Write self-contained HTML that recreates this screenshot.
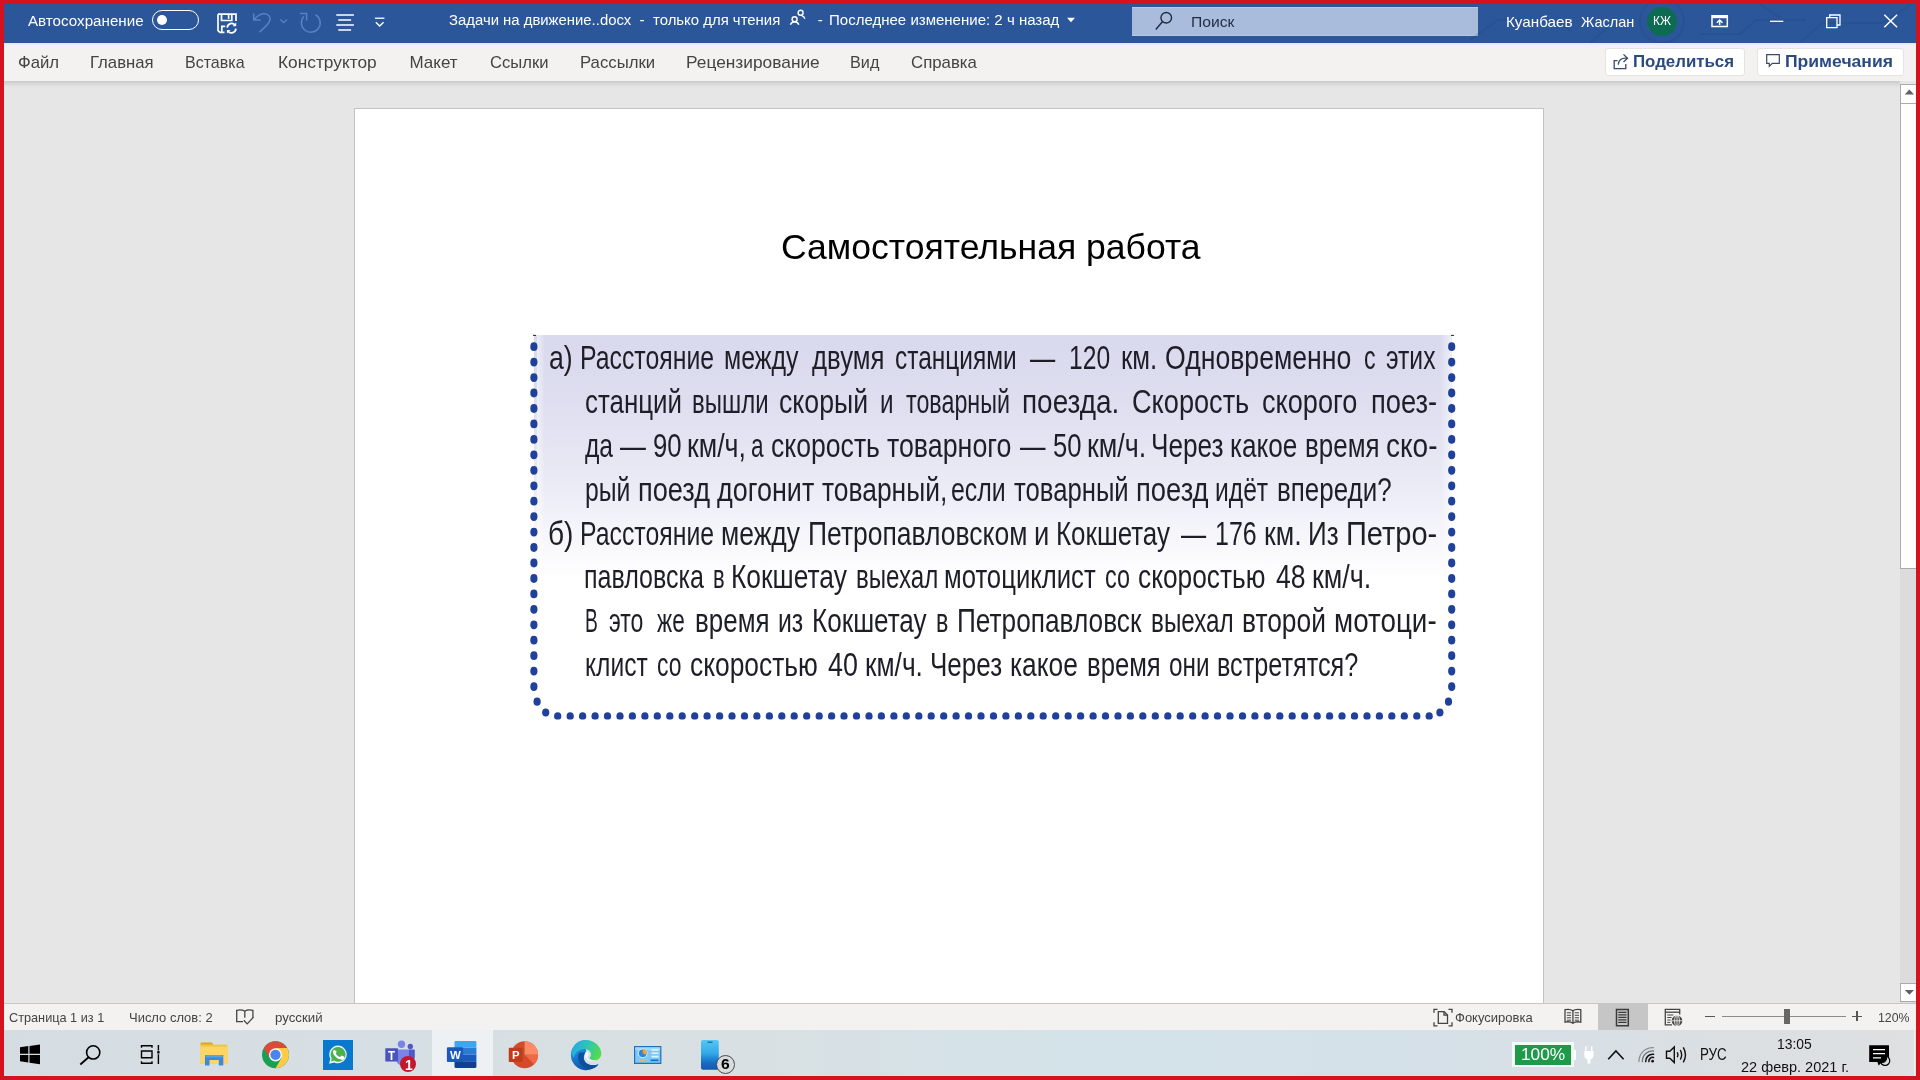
<!DOCTYPE html>
<html lang="ru"><head><meta charset="utf-8"><title>Задачи на движение..docx - Word</title>
<style>
html,body{margin:0;padding:0;background:#d4131f;}
body{width:1920px;height:1080px;overflow:hidden;position:relative;font-family:'Liberation Sans',sans-serif;}
#screen{position:absolute;left:0;top:0;width:1920px;height:1080px;overflow:hidden;background:#d4131f;will-change:transform;}
#screen div,#screen svg,#screen span.t,#screen .layer{position:absolute;}
.layer{left:0;top:0;width:1920px;height:1080px;display:block;}
span.t{white-space:pre;transform-origin:0 0;display:block;}
</style></head><body><div id="screen">
<header id="word-chrome" class="layer">
<!-- ===== title bar ===== -->
<div style="left:4px;top:4px;width:1912px;height:38.7px;background:#2b579a;"></div>
<span class="t" style="left:28.30px;top:12.85px;font-size:15.3px;line-height:15.3px;color:#fff;transform:scaleX(0.9914);">Автосохранение</span>
<div style="left:152.2px;top:10.2px;width:47px;height:19.4px;background:transparent;border:1.4px solid #fff;border-radius:11px;box-sizing:border-box;"></div>
<div style="left:157.1px;top:15.25px;width:10px;height:10px;background:#fff;border-radius:50%;"></div>
<svg style="left:216px;top:12px;" width="22" height="22" viewBox="0 0 22 22"><g fill="none" stroke="#fff" stroke-width="1.700">
<path d="M2 2.200h18v6.800M2 2.200v16.400l2 1.800h4.500"/><path d="M5.5 2.2v6.3h10.3V2.2"/><path d="M12.6 2.8v4"/><path d="M5.8 20v-5.6h3.4"/>
<path d="M11.2 15.6a4.4 4.4 0 0 1 8-2.2M19.9 16.6a4.4 4.4 0 0 1-8 2.3"/></g>
<path d="M20.2 10.6v3.6h-3.6zM10.9 21.6V18h3.6z" fill="#fff"/></svg>
<svg style="left:250px;top:11px;" width="24" height="24" viewBox="0 0 24 24"><g fill="none" stroke="#5782c6" stroke-width="1.5">
<path d="M3.75 2.5v6.600h6.850"/><path d="M3.9 9C7 5 10.500 2.800 14.400 2.800c3.600 0 5.900 2.500 5.600 5.800-.300 3.900-6 8.400-10.600 12.650"/></g></svg>
<svg style="left:279px;top:17px;" width="10" height="8" viewBox="0 0 10 8"><path d="M1.300 2.400l3.450 3.200L8 2.400" fill="none" stroke="#5782c6" stroke-width="1.300"/></svg>
<svg style="left:297px;top:10px;" width="26" height="26" viewBox="0 0 26 26"><g fill="none" stroke="#5782c6" stroke-width="1.5">
<path d="M3 3.500h6.600v6.900"/><path d="M18.600 4.750A9.400 9.400 0 1 1 6.750 6.600"/></g></svg>
<svg style="left:335px;top:13px;" width="20" height="20" viewBox="0 0 20 20"><g stroke="#fff" stroke-width="1.5"><path d="M1.300 1.900h17.600M3.300 7h12.800M1.300 12h17.600M3.300 17h12.800"/></g></svg>
<svg style="left:374px;top:15px;" width="12" height="14" viewBox="0 0 12 14"><path d="M1 3.200h9.400" stroke="#fff" stroke-width="1.300"/><path d="M1.800 7.200l3.900 3.900 3.900-3.900" fill="none" stroke="#fff" stroke-width="1.400"/></svg>
<span class="t" style="left:448.81px;top:11.85px;font-size:15.3px;line-height:15.3px;color:#fff;transform:scaleX(0.9725);">Задачи на движение..docx</span>
<span class="t" style="left:639.38px;top:11.85px;font-size:15.3px;line-height:15.3px;color:#fff;">-</span>
<span class="t" style="left:653.06px;top:11.85px;font-size:15.3px;line-height:15.3px;color:#fff;transform:scaleX(0.9750);">только для чтения</span>
<svg style="left:788px;top:8px;" width="20" height="20" viewBox="0 0 20 20"><g fill="none" stroke="#fff" stroke-width="1.400"><circle cx="12.600" cy="4.750" r="2.500"/><circle cx="6.600" cy="11.200" r="2.500"/>
<path d="M13.800 7.700c1.500.500 2.600 1.600 3.100 3.100M2.400 16.800a4.400 4.400 0 0 1 8.400 0"/></g></svg>
<span class="t" style="left:817.67px;top:11.85px;font-size:15.3px;line-height:15.3px;color:#fff;">-</span>
<span class="t" style="left:829.13px;top:11.85px;font-size:15.3px;line-height:15.3px;color:#fff;transform:scaleX(0.9818);">Последнее изменение: 2 ч назад</span>
<svg style="left:1066px;top:17px;" width="10" height="6" viewBox="0 0 10 6"><path d="M1 .800h8L5 5.300z" fill="#fff"/></svg>
<div style="left:1132px;top:7px;width:346px;height:29.2px;background:#a9bcdb;border-top:1px solid #b4c8ea;border-bottom:1px solid #b4c8ea;box-sizing:border-box;"></div>
<svg style="left:1154px;top:11px;" width="22" height="20" viewBox="0 0 22 20"><circle cx="12.250" cy="6.750" r="5.300" fill="none" stroke="#1f2d44" stroke-width="1.400"/><path d="M8.600 10.600L1.800 18.400" stroke="#1f2d44" stroke-width="1.500"/></svg>
<span class="t" style="left:1191.46px;top:13.80px;font-size:15px;line-height:15px;color:#1f2d44;transform:scaleX(1.0444);">Поиск</span>
<svg style="left:1470px;top:4px;" width="446" height="39" viewBox="0 0 446 39"><g fill="none" stroke="#1d3f7a" stroke-opacity=".22" stroke-width="2"><circle cx="192" cy="17" r="22"/><path d="M0 36l28-20h60l14 12"/><path d="M120 39l18-16"/><path d="M230 30h40l16-14h50"/><path d="M330 39l22-20h60l30-19"/><path d="M290 0l20 14"/></g></svg>
<span class="t" style="left:1506.29px;top:14.10px;font-size:15px;line-height:15px;color:#fff;transform:scaleX(1.0154);">Куанбаев</span>
<span class="t" style="left:1580.82px;top:14.10px;font-size:15px;line-height:15px;color:#fff;transform:scaleX(0.9645);">Жаслан</span>
<div style="left:1647.3px;top:6.8px;width:29.4px;height:29.4px;background:#0c6b50;border-radius:50%;"></div>
<span class="t" style="left:1652.85px;top:15.32px;font-size:12.5px;line-height:12.5px;color:#fff;transform:scaleX(0.9515);">КЖ</span>
<svg style="left:1709px;top:13px;" width="22" height="16" viewBox="0 0 22 16"><g fill="none" stroke="#fff" stroke-width="1.500"><path d="M3 2.700h15.300v10.800H3z"/><path d="M3 4h15.300" stroke-width="2.400"/><path d="M10.650 12V7.200M7.800 9.800l2.850-2.800 2.850 2.800"/></g></svg>
<svg style="left:1769px;top:20px;" width="16" height="3" viewBox="0 0 16 3"><path d="M1 1.300h13.300" stroke="#fff" stroke-width="1.300"/></svg>
<svg style="left:1825px;top:13px;" width="18" height="16" viewBox="0 0 18 16"><g fill="none" stroke="#fff" stroke-width="1.300"><path d="M1.700 4.700h10.300v10h-10.300z"/><path d="M4.700 4.700V2h10.300v10h-3"/></g></svg>
<svg style="left:1883px;top:13px;" width="16" height="16" viewBox="0 0 16 16"><path d="M1.300 1.700l12.800 12.600M14.100 1.700L1.300 14.300" stroke="#fff" stroke-width="1.500"/></svg>
<!-- ===== ribbon tabs ===== -->
<div style="left:4px;top:42.7px;width:1912px;height:38.2px;background:#f3f2f1;"></div>
<div style="left:4px;top:42.7px;width:1912px;height:3.3px;background:linear-gradient(#dde9fa,#e9eef6 60%,#f3f2f1);"></div>
<span class="t" style="left:17.52px;top:53.71px;font-size:17px;line-height:17px;color:#444;transform:scaleX(0.9838);">Файл</span>
<span class="t" style="left:90.40px;top:53.71px;font-size:17px;line-height:17px;color:#444;transform:scaleX(0.9823);">Главная</span>
<span class="t" style="left:184.55px;top:53.71px;font-size:17px;line-height:17px;color:#444;transform:scaleX(0.9425);">Вставка</span>
<span class="t" style="left:278.35px;top:53.71px;font-size:17px;line-height:17px;color:#444;transform:scaleX(1.0178);">Конструктор</span>
<span class="t" style="left:409.47px;top:53.71px;font-size:17px;line-height:17px;color:#444;">Макет</span>
<span class="t" style="left:489.52px;top:53.71px;font-size:17px;line-height:17px;color:#444;transform:scaleX(0.9766);">Ссылки</span>
<span class="t" style="left:580.09px;top:53.71px;font-size:17px;line-height:17px;color:#444;transform:scaleX(0.9841);">Рассылки</span>
<span class="t" style="left:686.35px;top:53.71px;font-size:17px;line-height:17px;color:#444;transform:scaleX(1.0189);">Рецензирование</span>
<span class="t" style="left:850.33px;top:53.71px;font-size:17px;line-height:17px;color:#444;transform:scaleX(0.9545);">Вид</span>
<span class="t" style="left:910.51px;top:53.71px;font-size:17px;line-height:17px;color:#444;transform:scaleX(0.9879);">Справка</span>
<div style="left:1605px;top:47.5px;width:140px;height:28.5px;background:#fff;border:1px solid #e6e4e2;border-radius:3px;box-sizing:border-box;"></div>
<svg style="left:1612px;top:52px;" width="18" height="19" viewBox="0 0 18 19"><g fill="none" stroke="#3b4a66" stroke-width="1.300"><path d="M5.500 8.700H2.200v8h11.600V12"/><path d="M6.300 12.800c.300-4.300 3.200-6.600 7.200-6.600h2"/><path d="M11.500 2.400l4 3.800-4 3.800"/></g></svg>
<span class="t" style="left:1633.38px;top:54.06px;font-size:16px;line-height:16px;color:#2a4a80;font-weight:bold;transform:scaleX(1.0525);">Поделиться</span>
<div style="left:1757px;top:47.5px;width:147px;height:28.5px;background:#fff;border:1px solid #e6e4e2;border-radius:3px;box-sizing:border-box;"></div>
<svg style="left:1765px;top:53px;" width="16" height="16" viewBox="0 0 16 16"><path d="M1.700 1.700h12.600v8.600H7.300l-3 3v-3H1.700z" fill="none" stroke="#3b4a66" stroke-width="1.200"/></svg>
<span class="t" style="left:1785.34px;top:54.06px;font-size:16px;line-height:16px;color:#2a4a80;font-weight:bold;transform:scaleX(1.0963);">Примечания</span>
</header>
<main id="document-area" class="layer">
<!-- ===== document area ===== -->
<div style="left:4px;top:80.9px;width:1912px;height:922.1px;background:#e6e6e6;"></div>
<div style="left:4px;top:80.9px;width:1896px;height:6px;background:linear-gradient(#cbcbcb,#e6e6e6);"></div>
<div style="left:354px;top:108px;width:1190px;height:896px;background:#fff;border:1px solid #c3c3c3;border-bottom:none;box-sizing:border-box;"></div>
<span class="t" style="left:780.73px;top:229.63px;font-size:35.4px;line-height:35.4px;color:#000;transform:scaleX(1.0047);">Самостоятельная работа</span>
<div style="left:533.5px;top:335px;width:918.5px;height:385px;background:linear-gradient(#d9d9ee 0%,#dedef0 17%,#e5e5f3 30%,#eeeef8 43%,#f7f7fb 53%,#fefeff 62%,#fff 66%);"></div>
<div style="left:537px;top:335px;width:8px;height:385px;background:linear-gradient(90deg,rgba(255,255,255,.55),rgba(255,255,255,0));"></div>
<div style="left:1440px;top:335px;width:12px;height:385px;background:linear-gradient(90deg,rgba(255,255,255,0),rgba(255,255,255,.6));"></div>
<svg style="left:525px;top:330px;clip-path:inset(0 0 0.5px 0);" width="940" height="390" viewBox="0 0 940 390"><g fill="#20419a"><ellipse cx="8.9" cy="16.7" rx="3.6" ry="4.4"/><ellipse cx="926.7" cy="16.7" rx="3.6" ry="4.4"/><ellipse cx="8.9" cy="32.1" rx="3.6" ry="4.4"/><ellipse cx="926.7" cy="32.1" rx="3.6" ry="4.4"/><ellipse cx="8.9" cy="47.6" rx="3.6" ry="4.4"/><ellipse cx="926.7" cy="47.6" rx="3.6" ry="4.4"/><ellipse cx="8.9" cy="63.0" rx="3.6" ry="4.4"/><ellipse cx="926.7" cy="63.0" rx="3.6" ry="4.4"/><ellipse cx="8.9" cy="78.5" rx="3.6" ry="4.4"/><ellipse cx="926.7" cy="78.5" rx="3.6" ry="4.4"/><ellipse cx="8.9" cy="93.9" rx="3.6" ry="4.4"/><ellipse cx="926.7" cy="93.9" rx="3.6" ry="4.4"/><ellipse cx="8.9" cy="109.4" rx="3.6" ry="4.4"/><ellipse cx="926.7" cy="109.4" rx="3.6" ry="4.4"/><ellipse cx="8.9" cy="124.8" rx="3.6" ry="4.4"/><ellipse cx="926.7" cy="124.8" rx="3.6" ry="4.4"/><ellipse cx="8.9" cy="140.3" rx="3.6" ry="4.4"/><ellipse cx="926.7" cy="140.3" rx="3.6" ry="4.4"/><ellipse cx="8.9" cy="155.8" rx="3.6" ry="4.4"/><ellipse cx="926.7" cy="155.8" rx="3.6" ry="4.4"/><ellipse cx="8.9" cy="171.2" rx="3.6" ry="4.4"/><ellipse cx="926.7" cy="171.2" rx="3.6" ry="4.4"/><ellipse cx="8.9" cy="186.6" rx="3.6" ry="4.4"/><ellipse cx="926.7" cy="186.6" rx="3.6" ry="4.4"/><ellipse cx="8.9" cy="202.1" rx="3.6" ry="4.4"/><ellipse cx="926.7" cy="202.1" rx="3.6" ry="4.4"/><ellipse cx="8.9" cy="217.5" rx="3.6" ry="4.4"/><ellipse cx="926.7" cy="217.5" rx="3.6" ry="4.4"/><ellipse cx="8.9" cy="233.0" rx="3.6" ry="4.4"/><ellipse cx="926.7" cy="233.0" rx="3.6" ry="4.4"/><ellipse cx="8.9" cy="248.5" rx="3.6" ry="4.4"/><ellipse cx="926.7" cy="248.5" rx="3.6" ry="4.4"/><ellipse cx="8.9" cy="263.9" rx="3.6" ry="4.4"/><ellipse cx="926.7" cy="263.9" rx="3.6" ry="4.4"/><ellipse cx="8.9" cy="279.3" rx="3.6" ry="4.4"/><ellipse cx="926.7" cy="279.3" rx="3.6" ry="4.4"/><ellipse cx="8.9" cy="294.8" rx="3.6" ry="4.4"/><ellipse cx="926.7" cy="294.8" rx="3.6" ry="4.4"/><ellipse cx="8.9" cy="310.2" rx="3.6" ry="4.4"/><ellipse cx="926.7" cy="310.2" rx="3.6" ry="4.4"/><ellipse cx="8.9" cy="325.7" rx="3.6" ry="4.4"/><ellipse cx="926.7" cy="325.7" rx="3.6" ry="4.4"/><ellipse cx="8.9" cy="341.1" rx="3.6" ry="4.4"/><ellipse cx="926.7" cy="341.1" rx="3.6" ry="4.4"/><ellipse cx="8.9" cy="356.6" rx="3.6" ry="4.4"/><ellipse cx="926.7" cy="356.6" rx="3.6" ry="4.4"/><ellipse cx="12.1" cy="371.7" rx="3.6" ry="4.1"/><ellipse cx="20.7" cy="382.5" rx="3.6" ry="3.9"/><ellipse cx="923.5" cy="371.7" rx="3.6" ry="4.1"/><ellipse cx="914.9" cy="382.5" rx="3.6" ry="3.9"/><ellipse cx="32.7" cy="386.2" rx="3.6" ry="3.9"/><ellipse cx="45.2" cy="386.2" rx="3.6" ry="3.9"/><ellipse cx="57.6" cy="386.2" rx="3.6" ry="3.9"/><ellipse cx="70.1" cy="386.2" rx="3.6" ry="3.9"/><ellipse cx="82.5" cy="386.2" rx="3.6" ry="3.9"/><ellipse cx="95.0" cy="386.2" rx="3.6" ry="3.9"/><ellipse cx="107.4" cy="386.2" rx="3.6" ry="3.9"/><ellipse cx="119.9" cy="386.2" rx="3.6" ry="3.9"/><ellipse cx="132.3" cy="386.2" rx="3.6" ry="3.9"/><ellipse cx="144.8" cy="386.2" rx="3.6" ry="3.9"/><ellipse cx="157.2" cy="386.2" rx="3.6" ry="3.9"/><ellipse cx="169.7" cy="386.2" rx="3.6" ry="3.9"/><ellipse cx="182.1" cy="386.2" rx="3.6" ry="3.9"/><ellipse cx="194.6" cy="386.2" rx="3.6" ry="3.9"/><ellipse cx="207.0" cy="386.2" rx="3.6" ry="3.9"/><ellipse cx="219.5" cy="386.2" rx="3.6" ry="3.9"/><ellipse cx="231.9" cy="386.2" rx="3.6" ry="3.9"/><ellipse cx="244.4" cy="386.2" rx="3.6" ry="3.9"/><ellipse cx="256.8" cy="386.2" rx="3.6" ry="3.9"/><ellipse cx="269.2" cy="386.2" rx="3.6" ry="3.9"/><ellipse cx="281.7" cy="386.2" rx="3.6" ry="3.9"/><ellipse cx="294.2" cy="386.2" rx="3.6" ry="3.9"/><ellipse cx="306.6" cy="386.2" rx="3.6" ry="3.9"/><ellipse cx="319.0" cy="386.2" rx="3.6" ry="3.9"/><ellipse cx="331.5" cy="386.2" rx="3.6" ry="3.9"/><ellipse cx="344.0" cy="386.2" rx="3.6" ry="3.9"/><ellipse cx="356.4" cy="386.2" rx="3.6" ry="3.9"/><ellipse cx="368.9" cy="386.2" rx="3.6" ry="3.9"/><ellipse cx="381.3" cy="386.2" rx="3.6" ry="3.9"/><ellipse cx="393.8" cy="386.2" rx="3.6" ry="3.9"/><ellipse cx="406.2" cy="386.2" rx="3.6" ry="3.9"/><ellipse cx="418.7" cy="386.2" rx="3.6" ry="3.9"/><ellipse cx="431.1" cy="386.2" rx="3.6" ry="3.9"/><ellipse cx="443.5" cy="386.2" rx="3.6" ry="3.9"/><ellipse cx="456.0" cy="386.2" rx="3.6" ry="3.9"/><ellipse cx="468.5" cy="386.2" rx="3.6" ry="3.9"/><ellipse cx="480.9" cy="386.2" rx="3.6" ry="3.9"/><ellipse cx="493.4" cy="386.2" rx="3.6" ry="3.9"/><ellipse cx="505.8" cy="386.2" rx="3.6" ry="3.9"/><ellipse cx="518.2" cy="386.2" rx="3.6" ry="3.9"/><ellipse cx="530.7" cy="386.2" rx="3.6" ry="3.9"/><ellipse cx="543.2" cy="386.2" rx="3.6" ry="3.9"/><ellipse cx="555.6" cy="386.2" rx="3.6" ry="3.9"/><ellipse cx="568.1" cy="386.2" rx="3.6" ry="3.9"/><ellipse cx="580.5" cy="386.2" rx="3.6" ry="3.9"/><ellipse cx="593.0" cy="386.2" rx="3.6" ry="3.9"/><ellipse cx="605.4" cy="386.2" rx="3.6" ry="3.9"/><ellipse cx="617.8" cy="386.2" rx="3.6" ry="3.9"/><ellipse cx="630.3" cy="386.2" rx="3.6" ry="3.9"/><ellipse cx="642.8" cy="386.2" rx="3.6" ry="3.9"/><ellipse cx="655.2" cy="386.2" rx="3.6" ry="3.9"/><ellipse cx="667.7" cy="386.2" rx="3.6" ry="3.9"/><ellipse cx="680.1" cy="386.2" rx="3.6" ry="3.9"/><ellipse cx="692.5" cy="386.2" rx="3.6" ry="3.9"/><ellipse cx="705.0" cy="386.2" rx="3.6" ry="3.9"/><ellipse cx="717.5" cy="386.2" rx="3.6" ry="3.9"/><ellipse cx="729.9" cy="386.2" rx="3.6" ry="3.9"/><ellipse cx="742.3" cy="386.2" rx="3.6" ry="3.9"/><ellipse cx="754.8" cy="386.2" rx="3.6" ry="3.9"/><ellipse cx="767.2" cy="386.2" rx="3.6" ry="3.9"/><ellipse cx="779.7" cy="386.2" rx="3.6" ry="3.9"/><ellipse cx="792.2" cy="386.2" rx="3.6" ry="3.9"/><ellipse cx="804.6" cy="386.2" rx="3.6" ry="3.9"/><ellipse cx="817.0" cy="386.2" rx="3.6" ry="3.9"/><ellipse cx="829.5" cy="386.2" rx="3.6" ry="3.9"/><ellipse cx="842.0" cy="386.2" rx="3.6" ry="3.9"/><ellipse cx="854.4" cy="386.2" rx="3.6" ry="3.9"/><ellipse cx="866.8" cy="386.2" rx="3.6" ry="3.9"/><ellipse cx="879.3" cy="386.2" rx="3.6" ry="3.9"/><ellipse cx="891.8" cy="386.2" rx="3.6" ry="3.9"/><ellipse cx="904.2" cy="386.2" rx="3.6" ry="3.9"/></g><path d="M8 5.4h3M926 5.4h3" stroke="#222" stroke-width="1"/></svg>
<div id="task-text" style="left:0;top:0;width:0;height:0;" lang="ru">
<div class="ln" style="left:0;top:0;width:0;height:0;">
<span class="t" style="left:548.77px;top:341.17px;font-size:33px;line-height:33px;color:#1e1e28;transform:scaleX(0.8082);">а)</span>
<span class="t" style="left:579.96px;top:341.17px;font-size:33px;line-height:33px;color:#1e1e28;transform:scaleX(0.7520);">Расстояние</span>
<span class="t" style="left:724.14px;top:341.17px;font-size:33px;line-height:33px;color:#1e1e28;transform:scaleX(0.7570);">между</span>
<span class="t" style="left:812.00px;top:341.17px;font-size:33px;line-height:33px;color:#1e1e28;transform:scaleX(0.7814);">двумя</span>
<span class="t" style="left:895.04px;top:341.17px;font-size:33px;line-height:33px;color:#1e1e28;transform:scaleX(0.7408);">станциями</span>
<span class="t" style="left:1029.50px;top:341.17px;font-size:33px;line-height:33px;color:#1e1e28;transform:scaleX(0.7636);">—</span>
<span class="t" style="left:1068.76px;top:341.17px;font-size:33px;line-height:33px;color:#1e1e28;transform:scaleX(0.7475);">120</span>
<span class="t" style="left:1120.88px;top:341.17px;font-size:33px;line-height:33px;color:#1e1e28;transform:scaleX(0.7830);">км.</span>
<span class="t" style="left:1165.35px;top:341.17px;font-size:33px;line-height:33px;color:#1e1e28;transform:scaleX(0.8071);">Одновременно</span>
<span class="t" style="left:1363.68px;top:341.17px;font-size:33px;line-height:33px;color:#1e1e28;transform:scaleX(0.7022);">с</span>
<span class="t" style="left:1386.11px;top:341.17px;font-size:33px;line-height:33px;color:#1e1e28;transform:scaleX(0.7480);">этих</span>
</div>
<div class="ln" style="left:0;top:0;width:0;height:0;">
<span class="t" style="left:584.69px;top:384.67px;font-size:33px;line-height:33px;color:#1e1e28;transform:scaleX(0.7851);">станций</span>
<span class="t" style="left:691.80px;top:384.67px;font-size:33px;line-height:33px;color:#1e1e28;transform:scaleX(0.7267);">вышли</span>
<span class="t" style="left:779.47px;top:384.67px;font-size:33px;line-height:33px;color:#1e1e28;transform:scaleX(0.8088);">скорый</span>
<span class="t" style="left:879.89px;top:384.67px;font-size:33px;line-height:33px;color:#1e1e28;transform:scaleX(0.7342);">и</span>
<span class="t" style="left:906.14px;top:384.67px;font-size:33px;line-height:33px;color:#1e1e28;transform:scaleX(0.7054);">товарный</span>
<span class="t" style="left:1021.76px;top:384.67px;font-size:33px;line-height:33px;color:#1e1e28;transform:scaleX(0.8455);">поезда.</span>
<span class="t" style="left:1132.43px;top:384.67px;font-size:33px;line-height:33px;color:#1e1e28;transform:scaleX(0.8229);">Скорость</span>
<span class="t" style="left:1262.25px;top:384.67px;font-size:33px;line-height:33px;color:#1e1e28;transform:scaleX(0.8226);">скорого</span>
<span class="t" style="left:1370.89px;top:384.67px;font-size:33px;line-height:33px;color:#1e1e28;transform:scaleX(0.8277);">поез-</span>
</div>
<div class="ln" style="left:0;top:0;width:0;height:0;">
<span class="t" style="left:584.90px;top:428.77px;font-size:33px;line-height:33px;color:#1e1e28;transform:scaleX(0.7457);">да</span>
<span class="t" style="left:620.30px;top:428.77px;font-size:33px;line-height:33px;color:#1e1e28;transform:scaleX(0.7848);">—</span>
<span class="t" style="left:652.69px;top:428.77px;font-size:33px;line-height:33px;color:#1e1e28;transform:scaleX(0.7805);">90</span>
<span class="t" style="left:687.43px;top:428.77px;font-size:33px;line-height:33px;color:#1e1e28;transform:scaleX(0.8117);">км/ч,</span>
<span class="t" style="left:751.39px;top:428.77px;font-size:33px;line-height:33px;color:#1e1e28;transform:scaleX(0.6845);">а</span>
<span class="t" style="left:771.17px;top:428.77px;font-size:33px;line-height:33px;color:#1e1e28;transform:scaleX(0.8057);">скорость</span>
<span class="t" style="left:886.98px;top:428.77px;font-size:33px;line-height:33px;color:#1e1e28;transform:scaleX(0.8120);">товарного</span>
<span class="t" style="left:1020.10px;top:428.77px;font-size:33px;line-height:33px;color:#1e1e28;transform:scaleX(0.7727);">—</span>
<span class="t" style="left:1052.70px;top:428.77px;font-size:33px;line-height:33px;color:#1e1e28;transform:scaleX(0.7776);">50</span>
<span class="t" style="left:1086.52px;top:428.77px;font-size:33px;line-height:33px;color:#1e1e28;transform:scaleX(0.8150);">км/ч.</span>
<span class="t" style="left:1150.86px;top:428.77px;font-size:33px;line-height:33px;color:#1e1e28;transform:scaleX(0.7927);">Через</span>
<span class="t" style="left:1230.37px;top:428.77px;font-size:33px;line-height:33px;color:#1e1e28;transform:scaleX(0.7926);">какое</span>
<span class="t" style="left:1304.58px;top:428.77px;font-size:33px;line-height:33px;color:#1e1e28;transform:scaleX(0.7859);">время</span>
<span class="t" style="left:1385.62px;top:428.77px;font-size:33px;line-height:33px;color:#1e1e28;transform:scaleX(0.8489);">ско-</span>
</div>
<div class="ln" style="left:0;top:0;width:0;height:0;">
<span class="t" style="left:584.75px;top:472.57px;font-size:33px;line-height:33px;color:#1e1e28;transform:scaleX(0.7503);">рый</span>
<span class="t" style="left:637.80px;top:472.57px;font-size:33px;line-height:33px;color:#1e1e28;transform:scaleX(0.8233);">поезд</span>
<span class="t" style="left:717.30px;top:472.57px;font-size:33px;line-height:33px;color:#1e1e28;transform:scaleX(0.8168);">догонит</span>
<span class="t" style="left:822.39px;top:472.57px;font-size:33px;line-height:33px;color:#1e1e28;transform:scaleX(0.8005);">товарный,</span>
<span class="t" style="left:951.32px;top:472.57px;font-size:33px;line-height:33px;color:#1e1e28;transform:scaleX(0.7546);">если</span>
<span class="t" style="left:1013.80px;top:472.57px;font-size:33px;line-height:33px;color:#1e1e28;transform:scaleX(0.7785);">товарный</span>
<span class="t" style="left:1135.59px;top:472.57px;font-size:33px;line-height:33px;color:#1e1e28;transform:scaleX(0.8291);">поезд</span>
<span class="t" style="left:1214.86px;top:472.57px;font-size:33px;line-height:33px;color:#1e1e28;transform:scaleX(0.7471);">идёт</span>
<span class="t" style="left:1276.58px;top:472.57px;font-size:33px;line-height:33px;color:#1e1e28;transform:scaleX(0.7866);">впереди?</span>
</div>
<div class="ln" style="left:0;top:0;width:0;height:0;">
<span class="t" style="left:548.28px;top:516.57px;font-size:33px;line-height:33px;color:#1e1e28;transform:scaleX(0.8523);">б)</span>
<span class="t" style="left:579.96px;top:516.57px;font-size:33px;line-height:33px;color:#1e1e28;transform:scaleX(0.7520);">Расстояние</span>
<span class="t" style="left:720.94px;top:516.57px;font-size:33px;line-height:33px;color:#1e1e28;transform:scaleX(0.8026);">между</span>
<span class="t" style="left:808.13px;top:516.57px;font-size:33px;line-height:33px;color:#1e1e28;transform:scaleX(0.8029);">Петропавловском</span>
<span class="t" style="left:1033.79px;top:516.57px;font-size:33px;line-height:33px;color:#1e1e28;transform:scaleX(0.8312);">и</span>
<span class="t" style="left:1056.27px;top:516.57px;font-size:33px;line-height:33px;color:#1e1e28;transform:scaleX(0.7859);">Кокшетау</span>
<span class="t" style="left:1180.50px;top:516.57px;font-size:33px;line-height:33px;color:#1e1e28;transform:scaleX(0.7606);">—</span>
<span class="t" style="left:1214.84px;top:516.57px;font-size:33px;line-height:33px;color:#1e1e28;transform:scaleX(0.7569);">176</span>
<span class="t" style="left:1263.83px;top:516.57px;font-size:33px;line-height:33px;color:#1e1e28;transform:scaleX(0.8121);">км.</span>
<span class="t" style="left:1307.77px;top:516.57px;font-size:33px;line-height:33px;color:#1e1e28;transform:scaleX(0.7872);">Из</span>
<span class="t" style="left:1345.93px;top:516.57px;font-size:33px;line-height:33px;color:#1e1e28;transform:scaleX(0.8789);">Петро-</span>
</div>
<div class="ln" style="left:0;top:0;width:0;height:0;">
<span class="t" style="left:583.93px;top:559.67px;font-size:33px;line-height:33px;color:#1e1e28;transform:scaleX(0.7588);">павловска</span>
<span class="t" style="left:713.03px;top:559.67px;font-size:33px;line-height:33px;color:#1e1e28;transform:scaleX(0.6649);">в</span>
<span class="t" style="left:730.84px;top:559.67px;font-size:33px;line-height:33px;color:#1e1e28;transform:scaleX(0.7992);">Кокшетау</span>
<span class="t" style="left:855.89px;top:559.67px;font-size:33px;line-height:33px;color:#1e1e28;transform:scaleX(0.7303);">выехал</span>
<span class="t" style="left:943.79px;top:559.67px;font-size:33px;line-height:33px;color:#1e1e28;transform:scaleX(0.7787);">мотоциклист</span>
<span class="t" style="left:1104.97px;top:559.67px;font-size:33px;line-height:33px;color:#1e1e28;transform:scaleX(0.7092);">со</span>
<span class="t" style="left:1137.68px;top:559.67px;font-size:33px;line-height:33px;color:#1e1e28;transform:scaleX(0.7969);">скоростью</span>
<span class="t" style="left:1275.89px;top:559.67px;font-size:33px;line-height:33px;color:#1e1e28;transform:scaleX(0.8034);">48</span>
<span class="t" style="left:1311.72px;top:559.67px;font-size:33px;line-height:33px;color:#1e1e28;transform:scaleX(0.8150);">км/ч.</span>
</div>
<div class="ln" style="left:0;top:0;width:0;height:0;">
<span class="t" style="left:584.80px;top:603.87px;font-size:33px;line-height:33px;color:#1e1e28;transform:scaleX(0.5818);">В</span>
<span class="t" style="left:609.14px;top:603.87px;font-size:33px;line-height:33px;color:#1e1e28;transform:scaleX(0.6989);">это</span>
<span class="t" style="left:657.00px;top:603.87px;font-size:33px;line-height:33px;color:#1e1e28;transform:scaleX(0.6856);">же</span>
<span class="t" style="left:695.38px;top:603.87px;font-size:33px;line-height:33px;color:#1e1e28;transform:scaleX(0.7859);">время</span>
<span class="t" style="left:778.05px;top:603.87px;font-size:33px;line-height:33px;color:#1e1e28;transform:scaleX(0.7526);">из</span>
<span class="t" style="left:812.36px;top:603.87px;font-size:33px;line-height:33px;color:#1e1e28;transform:scaleX(0.7908);">Кокшетау</span>
<span class="t" style="left:936.34px;top:603.87px;font-size:33px;line-height:33px;color:#1e1e28;transform:scaleX(0.7065);">в</span>
<span class="t" style="left:957.25px;top:603.87px;font-size:33px;line-height:33px;color:#1e1e28;transform:scaleX(0.7954);">Петропавловск</span>
<span class="t" style="left:1151.38px;top:603.87px;font-size:33px;line-height:33px;color:#1e1e28;transform:scaleX(0.7349);">выехал</span>
<span class="t" style="left:1241.85px;top:603.87px;font-size:33px;line-height:33px;color:#1e1e28;transform:scaleX(0.7986);">второй</span>
<span class="t" style="left:1334.46px;top:603.87px;font-size:33px;line-height:33px;color:#1e1e28;transform:scaleX(0.8432);">мотоци-</span>
</div>
<div class="ln" style="left:0;top:0;width:0;height:0;">
<span class="t" style="left:584.76px;top:647.77px;font-size:33px;line-height:33px;color:#1e1e28;transform:scaleX(0.7461);">клист</span>
<span class="t" style="left:656.68px;top:647.77px;font-size:33px;line-height:33px;color:#1e1e28;transform:scaleX(0.6940);">со</span>
<span class="t" style="left:690.18px;top:647.77px;font-size:33px;line-height:33px;color:#1e1e28;transform:scaleX(0.7994);">скоростью</span>
<span class="t" style="left:828.28px;top:647.77px;font-size:33px;line-height:33px;color:#1e1e28;transform:scaleX(0.8143);">40</span>
<span class="t" style="left:864.76px;top:647.77px;font-size:33px;line-height:33px;color:#1e1e28;transform:scaleX(0.7972);">км/ч.</span>
<span class="t" style="left:929.77px;top:647.77px;font-size:33px;line-height:33px;color:#1e1e28;transform:scaleX(0.7893);">Через</span>
<span class="t" style="left:1010.15px;top:647.77px;font-size:33px;line-height:33px;color:#1e1e28;transform:scaleX(0.7987);">какое</span>
<span class="t" style="left:1086.59px;top:647.77px;font-size:33px;line-height:33px;color:#1e1e28;transform:scaleX(0.7782);">время</span>
<span class="t" style="left:1168.94px;top:647.77px;font-size:33px;line-height:33px;color:#1e1e28;transform:scaleX(0.7359);">они</span>
<span class="t" style="left:1217.22px;top:647.77px;font-size:33px;line-height:33px;color:#1e1e28;transform:scaleX(0.7639);">встретятся?</span>
</div>
</div>
<div style="left:1900px;top:84px;width:16px;height:919px;background:#dcdcdc;"></div>
<div style="left:1900px;top:84px;width:16px;height:485px;background:#fff;border:1px solid #ababab;border-right:none;box-sizing:border-box;"></div>
<div style="left:1900px;top:103px;width:16px;height:1px;background:#ababab;"></div>
<svg style="left:1904px;top:89px;" width="11" height="7" viewBox="0 0 11 7"><path d="M5.400 .600L10 5.400H.800z" fill="#606060"/></svg>
<div style="left:1900px;top:983px;width:16px;height:19px;background:#fff;border:1px solid #ababab;border-right:none;box-sizing:border-box;"></div>
<svg style="left:1904px;top:989px;" width="11" height="7" viewBox="0 0 11 7"><path d="M5.400 5.800L10 1H.800z" fill="#606060"/></svg>
</main>
<footer id="status-bar" class="layer">
<!-- ===== status bar ===== -->
<div style="left:4px;top:1003px;width:1912px;height:27px;background:#f3f2f1;border-top:1px solid #c6c6c6;box-sizing:border-box;"></div>
<span class="t" style="left:8.59px;top:1010.80px;font-size:13px;line-height:13px;color:#444;transform:scaleX(0.9771);">Страница 1 из 1</span>
<span class="t" style="left:128.60px;top:1010.80px;font-size:13px;line-height:13px;color:#444;transform:scaleX(0.9974);">Число слов: 2</span>
<svg style="left:235px;top:1008px;" width="20" height="18" viewBox="0 0 20 18"><g fill="none" stroke="#444" stroke-width="1.300"><path d="M9.800 3.300C7.800 1.800 4.300 1.800 1.700 2.300v11.400h6.300"/><path d="M9.800 3.300c2-1.500 5.500-1.500 8.100-1v7.500"/><path d="M9.800 3.300v6.500"/><path d="M8.800 12.300l3.400 3.600 6.300-6.800"/></g></svg>
<span class="t" style="left:275.37px;top:1010.80px;font-size:13px;line-height:13px;color:#444;transform:scaleX(1.0189);">русский</span>
<svg style="left:1433px;top:1007.5px;" width="20" height="19" viewBox="0 0 20 19"><g fill="none" stroke="#444" stroke-width="1.300"><path d="M1 4.800V1.300h3.500M15.500 1.300H19v3.500M19 14.300v3.500h-3.500M4.500 17.800H1v-3.500"/><path d="M5.300 3.700h5.800l3.400 3.400v8.200H5.300z"/><path d="M11 3.700v3.500h3.500"/></g></svg>
<span class="t" style="left:1455.01px;top:1010.90px;font-size:13px;line-height:13px;color:#444;">Фокусировка</span>
<svg style="left:1563.5px;top:1007.5px;" width="18" height="17" viewBox="0 0 18 17"><g fill="none" stroke="#444" stroke-width="1.300"><path d="M8.900 2.800C7 1.300 3.500 1.200 1 1.700v12.400c2.500-.500 6-.400 7.900 1.100 1.900-1.500 5.400-1.600 7.900-1.100V1.700c-2.500-.500-6-.400-7.900 1.100z"/><path d="M8.900 2.800v12.400"/></g><g stroke="#444" stroke-width="1"><path d="M2.800 4.800h4.300M2.800 7.300h4.300M2.800 9.800h4.300M2.800 12.200h4.300M10.700 4.800H15M10.700 7.300H15M10.700 9.800H15M10.700 12.200H15"/></g></svg>
<div style="left:1598.2px;top:1004px;width:49.6px;height:26px;background:#c6c6c6;"></div>
<svg style="left:1615px;top:1007.5px;" width="15" height="19" viewBox="0 0 15 19"><path d="M1.500 1.500h11.800v16.200H1.500z" fill="none" stroke="#3a3a3a" stroke-width="1.500"/><path d="M3.300 4.300h8.200M3.300 6.800h8.200M3.300 9.300h8.200M3.300 11.800h8.200M3.300 14.300h8.200" stroke="#3a3a3a" stroke-width="1.200"/></svg>
<svg style="left:1663.5px;top:1007.5px;" width="20" height="19" viewBox="0 0 20 19"><g fill="none" stroke="#444" stroke-width="1.300"><path d="M8 16.800H1.300V1.300h14.400v5.200"/><path d="M1.300 4.200h14.400"/></g><g stroke="#444" stroke-width="1"><path d="M3.300 7h6M3.300 9.500h4.300M3.300 12h3.300M3.300 14.400h3"/></g><circle cx="13" cy="12.800" r="5.300" fill="#444"/><g fill="none" stroke="#f3f2f1" stroke-width=".9"><path d="M7.800 12.800h10.400M13 7.600v10.400"/><ellipse cx="13" cy="12.800" rx="2.400" ry="5.200"/></g></svg>
<div style="left:1705px;top:1015.5px;width:9.5px;height:1.3px;background:#555;"></div>
<div style="left:1721.7px;top:1015.7px;width:124px;height:1px;background:#8a8a8a;"></div>
<div style="left:1783.6px;top:1009.3px;width:6px;height:14.7px;background:#666;"></div>
<div style="left:1852px;top:1015.5px;width:10px;height:1.3px;background:#555;"></div>
<div style="left:1856.4px;top:1011.2px;width:1.3px;height:10px;background:#555;"></div>
<span class="t" style="left:1878.11px;top:1010.80px;font-size:13px;line-height:13px;color:#444;transform:scaleX(0.9505);">120%</span>
</footer>
<nav id="taskbar" class="layer">
<!-- ===== taskbar ===== -->
<div style="left:4px;top:1030px;width:1912px;height:46px;background:linear-gradient(90deg,#d6dde2 0%,#d6dfe3 20%,#d8e0e3 40%,#d3e3e9 57%,#d5e0e8 75%,#dadfe3 88%,#dee0e1 100%);"></div>
<div style="left:1914.3px;top:1030px;width:1px;height:46px;background:#f0f1f2;"></div>
<svg style="left:19px;top:1044px;" width="22" height="22" viewBox="0 0 22 22"><path d="M1 3.300l8.300-1.200v7.600H1zM10.500 1.900L21 .500v9.200H10.500zM1 10.900h8.300v7.600L1 17.300zM10.500 10.900H21v9.300l-10.500-1.500z" fill="#000"/></svg>
<svg style="left:78px;top:1043px;" width="24" height="24" viewBox="0 0 24 24"><circle cx="15.200" cy="9.400" r="6.600" fill="none" stroke="#000" stroke-width="1.600"/><path d="M10.600 14.300L2.300 21.500" stroke="#000" stroke-width="1.800"/></svg>
<svg style="left:138px;top:1043px;" width="24" height="23" viewBox="0 0 24 23"><g fill="none" stroke="#000" stroke-width="1.400"><path d="M3.500 8h10.500v6.800H3.500z"/><path d="M3.500 4.700V2.700h10.500v2M3.500 18.200v2h10.500v-2"/><path d="M20.400 2v5.600M20.400 11.300v9.700"/></g><path d="M19.200 8.100h2.400v2.400h-2.400z" fill="#000"/></svg>
<svg style="left:199px;top:1041px;" width="31" height="26" viewBox="0 0 31 26"><path d="M1.500 3c0-.900.600-1.500 1.500-1.500h9.300c.700 0 1.300.500 1.400 1.200l.200 1.300H1.500z" fill="#dfa616"/><path d="M1.500 3.600h25.800c.800 0 1.400.600 1.400 1.400v17.700H1.500z" fill="#f3c44a"/>
<path d="M1.500 5.800h27.200v17H1.500z" fill="#fbd667"/><path d="M6 14h18.300v10.600h-4.500v-5.500h-9.300v5.500H6z" fill="#3b8bd7"/><path d="M6.600 14h17.100v2.300H6.600z" fill="#56a3e8"/></svg>
<svg style="left:261px;top:1040px;" width="30" height="30" viewBox="0 0 30 30"><circle cx="14.500" cy="14.800" r="13.500" fill="#1a9f53"/>
<path d="M2.810 8.050A13.500 13.500 0 0 1 26.190 8.050H14.500v6.750L8.650 18.180z" fill="#de4a3a"/>
<path d="M26.190 8.050A13.500 13.500 0 0 1 14.500 28.300L20.350 18.180 14.500 14.800V8.050z" fill="#fdcb45"/>
<circle cx="14.500" cy="14.800" r="6.600" fill="#f4f6f7"/><circle cx="14.500" cy="14.800" r="5.100" fill="#4a84ee"/></svg>
<div style="left:323px;top:1040.2px;width:30px;height:29.6px;background:#0b78d0;"></div>
<svg style="left:323px;top:1040px;" width="30" height="30" viewBox="0 0 30 30"><path d="M15 5.600a8.800 8.800 0 0 0-7.600 13.200L6 23.800l5.200-1.400A8.800 8.800 0 1 0 15 5.600z" fill="#e9f7ee"/><path d="M15 7a7.400 7.400 0 0 0-6.200 11.400l-.800 3 3.100-.800A7.400 7.400 0 1 0 15 7z" fill="#4caf50"/>
<path d="M12.300 10.600c-.300-.600-.600-.600-.900-.600-.800 0-1.500.900-1.500 2 0 1.300 1 2.600 1.100 2.800.200.200 2 3.200 4.900 4.300 2.400.900 2.900.700 3.400.700.500-.100 1.700-.700 1.900-1.400.200-.700.200-1.200.200-1.400-.100-.100-.300-.200-.600-.400l-1.900-.900c-.300-.100-.500-.200-.700.100l-.900 1.100c-.200.200-.300.200-.600.100-.300-.200-1.200-.500-2.300-1.400-.900-.800-1.400-1.700-1.600-2-.200-.300 0-.500.100-.600l.700-.900c.100-.200.100-.300 0-.500z" fill="#fff"/></svg>
<svg style="left:384px;top:1038px;" width="34" height="34" viewBox="0 0 34 34"><circle cx="17.500" cy="6.300" r="3.700" fill="#7b83eb"/><circle cx="26.300" cy="8.500" r="2.700" fill="#5059c9"/>
<path d="M11 11.500h12.500c.600 0 1 .400 1 1v8.500a6.300 6.300 0 0 1-12.600 0z" fill="#7b83eb"/><path d="M24.500 11.500h5.300c.600 0 1 .400 1 1V19a4.200 4.200 0 0 1-6.300 3.600z" fill="#5059c9"/>
<path d="M1.300 10.300h11.700c.600 0 1 .400 1 1v11.300c0 .600-.400 1-1 1H1.300z" fill="#4b53bc"/></svg>
<span class="t" style="left:388.28px;top:1050.14px;font-size:12px;line-height:12px;color:#fff;font-weight:bold;transform:scaleX(0.9544);">T</span>
<div style="left:400.3px;top:1056.2px;width:16.2px;height:16.2px;background:#c4172c;border-radius:50%;"></div>
<span class="t" style="left:404.57px;top:1057.53px;font-size:14.5px;line-height:14.5px;color:#fff;font-weight:bold;transform:scaleX(0.9541);">1</span>
<div style="left:432.3px;top:1030px;width:60.4px;height:46px;background:#eef1f3;"></div>
<svg style="left:446px;top:1040px;" width="32" height="30" viewBox="0 0 32 30"><path d="M9.700 1h19.500c.700 0 1.200.500 1.200 1.200v5.600H8.500V2.200C8.500 1.500 9 1 9.700 1z" fill="#41a5ee"/><path d="M8.500 7.800h21.900v6.700H8.500z" fill="#2b7cd3"/><path d="M8.500 14.500h21.900v6.700H8.500z" fill="#185abd"/><path d="M8.500 21.200h21.900v5.600c0 .700-.500 1.200-1.200 1.200H9.700c-.700 0-1.200-.500-1.200-1.200z" fill="#103f91"/>
<path d="M2.100 7.200h13.800c.700 0 1.200.500 1.200 1.200v12.500c0 .700-.500 1.200-1.200 1.200H2.100c-.700 0-1.200-.500-1.200-1.200V8.400c0-.700.500-1.200 1.200-1.200z" fill="#185abd"/></svg>
<span class="t" style="left:449.50px;top:1049.69px;font-size:11px;line-height:11px;color:#fff;font-weight:bold;transform:scaleX(1.0410);">W</span>
<svg style="left:507px;top:1040px;" width="34" height="30" viewBox="0 0 34 30"><circle cx="17.600" cy="14.700" r="13.500" fill="#d24a2a"/><path d="M17.600 1.200a13.500 13.500 0 0 1 13.500 13.500H17.600z" fill="#fd8b68"/><path d="M17.600 14.700h13.500a13.500 13.500 0 0 1-3.950 9.550z" fill="#ee6a45"/>
<path d="M2.900 7.750h11.500c.650 0 1.150.500 1.150 1.150v12.050c0 .650-.500 1.150-1.150 1.150H2.900c-.650 0-1.150-.500-1.150-1.150V8.900c0-.650.500-1.150 1.150-1.150z" fill="#c13b1b"/></svg>
<span class="t" style="left:511.88px;top:1049.61px;font-size:11.8px;line-height:11.8px;color:#fff;font-weight:bold;transform:scaleX(0.9630);">P</span>
<svg style="left:570px;top:1039px;" width="33" height="33" viewBox="0 0 33 33"><defs><linearGradient id="eg1" x1=".2" y1="0" x2=".6" y2="1"><stop offset="0" stop-color="#2fa9ea"/><stop offset=".55" stop-color="#1573c9"/><stop offset="1" stop-color="#0d4fa0"/></linearGradient><linearGradient id="eg2" x1="0" y1=".3" x2="1" y2=".6"><stop offset="0" stop-color="#25a8ea"/><stop offset=".5" stop-color="#2fc6b2"/><stop offset="1" stop-color="#56dc45"/></linearGradient></defs>
<path d="M16.100.900a15.200 15.200 0 1 0 12.400 24c-1.600.800-3.600 1.200-5.500 1.200-5.600 0-9.200-3.300-9.200-7.600 0-1.800.900-3.300 2.300-4.300z" fill="url(#eg1)"/>
<path d="M1.300 12.500C3 5.600 9 .900 16.100.900c8.400 0 15.200 6.500 15.200 13.500 0 4.200-3.100 6.900-6.500 6.900-3.300 0-5.100-1.300-5.100-2.400 0-.800 1.300-1.400 1.300-3.500 0-2.700-2.800-5.400-6.500-5.400-5.300 0-9.700 3.600-10.700 8.800a15 15 0 0 1-2.500-6.300z" fill="url(#eg2)"/>
<path d="M9.500 13.500c-1.500 2.300-1.800 5.300-.800 8.200 1.700 4.900 6.600 8.200 11.900 7.900 3.300-.200 6-1.700 7.900-4.200-1.600.700-3.500 1.100-5.400 1.100-5.700 0-9.400-3.400-9.400-7.900 0-2 .700-3.700 1.900-5-2.400-.300-4.700-.100-6.100-.100z" fill="#0b4c9a" opacity=".9"/>
<path d="M14.800 14.800c-.500 3 1.300 5.800 4.400 6.800 2.500.800 5.300.300 7.200-1.300-1 .500-2.300.900-3.600.900-3.300 0-5.300-1.400-5.300-2.700 0-.900 1.100-1.400 1.200-3.200.100-1.500-.800-2.600-1.900-2.600-1 0-1.800.900-2 2.100z" fill="#eef7fc"/></svg>
<svg style="left:633px;top:1045px;" width="30" height="20" viewBox="0 0 30 20"><path d="M1.600 1.700h26.200v16.600H1.600z" fill="#7fc8f3" stroke="#1f6fbd" stroke-width="1.200"/><path d="M2.200 2.300h25v3H2.200z" fill="#a9dcf8" opacity=".8"/><circle cx="9.700" cy="8.300" r="4.400" fill="#2e86d8" stroke="#d8effb" stroke-width="1"/><path d="M9.700 8.300V3.900a4.400 4.400 0 0 1 4 6.200z" fill="#f0a23c"/>
<g stroke="#dff3fd" stroke-width="1.600"><path d="M18.500 5h7M18.500 8.300h7M18.500 11.600h7"/></g><path d="M17.500 15.300h8" stroke="#1a6cc4" stroke-width="1.600"/><path d="M6.300 15.300h6.500" stroke="#e9b55a" stroke-width="1.300"/></svg>
<svg style="left:700px;top:1039px;" width="20" height="32" viewBox="0 0 20 32"><defs><linearGradient id="ph" x1="0" y1="0" x2="0" y2="1"><stop offset="0" stop-color="#56c8f3"/><stop offset=".45" stop-color="#33a9e6"/><stop offset=".62" stop-color="#1f86d6"/><stop offset=".8" stop-color="#1668bf"/><stop offset="1" stop-color="#1459ae"/></linearGradient></defs>
<path d="M3 1h13.800c1.100 0 2 .9 2 2v25.800c0 1.100-.9 2-2 2H3c-1.100 0-2-.9-2-2V3c0-1.100.9-2 2-2z" fill="url(#ph)"/><path d="M7.500 3.200h5" stroke="#0b4d8c" stroke-width="1"/></svg>
<div style="left:716px;top:1054.6px;width:19.4px;height:19.4px;background:#d9dbdd;border-radius:50%;border:1px solid #4a4a4a;box-sizing:border-box;"></div>
<span class="t" style="left:721.44px;top:1057.45px;font-size:14px;line-height:14px;color:#000;font-weight:bold;transform:scaleX(1.1156);">6</span>
<div style="left:1512.2px;top:1041.5px;width:61.6px;height:25.8px;background:#f4fbf6;"></div>
<div style="left:1573.8px;top:1050px;width:2.4px;height:10px;background:#fff;"></div>
<div style="left:1515px;top:1044.8px;width:56.2px;height:19.8px;background:#1f9a4b;"></div>
<span class="t" style="left:1520.62px;top:1046.11px;font-size:17px;line-height:17px;color:#fff;transform:scaleX(1.0164);">100%</span>
<svg style="left:1583px;top:1045px;" width="12" height="20" viewBox="0 0 12 20"><path d="M3 1.300v5M8.700 1.300v5" stroke="#fff" stroke-width="1.500"/><path d="M1.300 6h9.200v4.200c0 2-1.300 3.700-3.100 4.300v4h-3v-4c-1.800-.600-3.100-2.300-3.100-4.300z" fill="#fff"/></svg>
<svg style="left:1606px;top:1048px;" width="20" height="14" viewBox="0 0 20 14"><path d="M2.200 11.300l7.700-8.300 7.700 8.300" fill="none" stroke="#111" stroke-width="1.600"/></svg>
<svg style="left:1637px;top:1046px;" width="20" height="19" viewBox="0 0 20 19"><g fill="none" stroke-linecap="round"><path d="M2.0 15.6A13.6 13.6 0 0 1 16.5 1.6" stroke="#8b8f92" stroke-width="1.3"/><path d="M5.4 15.6A10.2 10.2 0 0 1 16.5 5.0" stroke="#70757a" stroke-width="1.3"/><path d="M8.7 15.6A6.9 6.9 0 0 1 16.5 8.3" stroke="#111" stroke-width="1.5"/><path d="M11.9 15.6A3.7 3.7 0 0 1 16.5 11.5" stroke="#111" stroke-width="1.5"/></g><circle cx="15.6" cy="15.2" r="1.350" fill="#111"/></svg>
<svg style="left:1664px;top:1044px;" width="25" height="22" viewBox="0 0 25 22"><g fill="none" stroke="#111" stroke-width="1.400"><path d="M2.500 7.300h3.300l4.500-4.300v15.600l-4.500-4.300H2.500z"/><path d="M13.300 8.300c.800 1.600.800 3.400 0 5"/><path d="M16.300 6c1.700 3 1.700 6.600 0 9.600"/><path d="M19.300 3.300c2.700 4.700 2.700 10.300 0 15"/></g></svg>
<span class="t" style="left:1699.63px;top:1047.39px;font-size:15.6px;line-height:15.6px;color:#111;transform:scaleX(0.8569);">РУС</span>
<span class="t" style="left:1777.26px;top:1036.20px;font-size:15px;line-height:15px;color:#111;transform:scaleX(0.9269);">13:05</span>
<span class="t" style="left:1740.87px;top:1058.80px;font-size:15px;line-height:15px;color:#111;transform:scaleX(0.9687);">22 февр. 2021 г.</span>
<svg style="left:1868px;top:1044px;" width="24" height="23" viewBox="0 0 24 23"><path d="M1.200 1.200h19.800v16.700h-6.800l-3.600 3.500-1.200-3.500H1.200z" fill="#000"/><path d="M5 5.600h12M5 9.700h12M5 13.800h8" stroke="#fff" stroke-width="1.300"/>
<path d="M18.300 12.200A4.700 4.700 0 1 1 12.600 18.200A4.600 4.600 0 0 0 18.300 12.200z" fill="#d9dcde" stroke="#000" stroke-width="1.200" stroke-linejoin="round"/></svg>
</nav>
</div></body></html>
